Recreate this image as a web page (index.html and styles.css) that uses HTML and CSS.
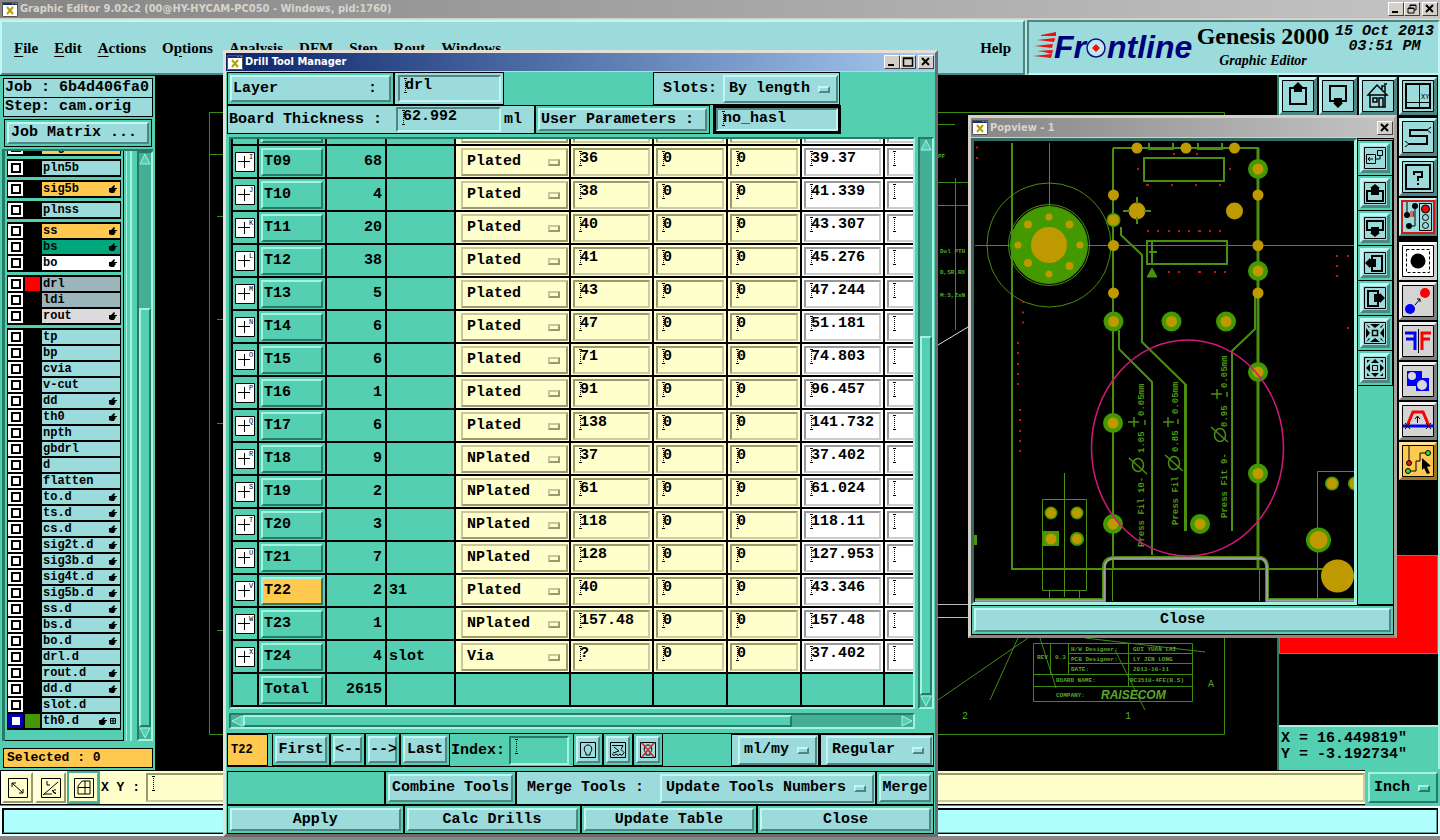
FILE: index.html
```html
<!DOCTYPE html>
<html lang="en">
<head>
<meta charset="utf-8">
<title>Graphic Editor 9.02c2</title>
<link rel="stylesheet" href="styles.css">
</head>
<body>
<svg class="defs" aria-hidden="true">
  <symbol id="xwin" viewBox="0 0 16 15"><path d="M0 0h16v15H0z" fill="#fff"/><path d="M0 0h16v3H0z" fill="#1b2a7c"/><path d="M10 1h2M13 1h2" stroke="#c8c8c8"/><path d="M.5.5h15v14H.5z" fill="none" stroke="#555"/><path d="M5 5l6 7M11 5l-6 7" stroke="#b5a000" stroke-width="2"/></symbol>
  <symbol id="hand" viewBox="0 0 8 8"><path d="M0 3h2l3-3 1 1-1 2h3v1H6l1 1-1 1H6l-1 2H2L0 7z"/></symbol>
</svg>
<div class="app">
  <header class="titlebar">
    <svg class="xi"><use href="#xwin"/></svg>
    <h1>Graphic Editor 9.02c2 (00@HY-HYCAM-PC050 - Windows, pid:1760)</h1>
    <button class="wb" aria-label="Minimize"><svg viewBox="0 0 12 10"><path d="M2 8h6" stroke="#000" stroke-width="2"/></svg></button>
    <button class="wb" aria-label="Restore"><svg viewBox="0 0 12 10"><path d="M4 4V1h6v5H8M4 1.5h6M2 4h6v5H2zM2 4.5h6" fill="none" stroke="#000"/></svg></button>
    <button class="wb wx" aria-label="Close"><svg viewBox="0 0 12 10"><path d="M2 1l7 7M9 1L2 8" stroke="#000" stroke-width="2"/></svg></button>
  </header>

  <div class="top">
    <nav class="menu">
      <button><u>F</u>ile</button><button><u>E</u>dit</button><button><u>A</u>ctions</button><button>O<u>p</u>tions</button><button>A<u>n</u>alysis</button><button>DFM</button><button>Step</button><button>Rout</button><button>Windows</button><button class="help">Help</button>
    </nav>
    <div class="brand">
      <svg class="logo" viewBox="0 0 162 36" role="img" aria-label="Frontline">
        <g fill="#f01010"><path d="M8 6l15-3v4l-15 0zM4 11l18-2-1 4-8-1zM1 17l19-2-1 4-8-1zM4 22l16-1-1 4-8-2zM0 27l19-2-1 4-8-1z"/></g>
        <g class="lt"><text x="21" y="29">Fr</text><text x="74" y="29">ntline</text></g>
        <circle cx="63" cy="19" r="9" fill="#bfe8ee" stroke="#101080" stroke-width="1.5"/><path d="M63 15l4 4-4 4-4-4z" fill="#f01010"/>
      </svg>
      <div class="prod"><strong>Genesis 2000</strong><em>Graphic Editor</em></div>
      <div class="date">15 Oct 2013<br>03:51 PM</div>
    </div>
  </div>

  <main class="mid">
    <aside class="side">
      <div class="info">Job : 6b4d406fa0</div>
      <div class="info">Step: cam.orig</div>
      <button class="btn matrix">Job Matrix ...</button>
      <div class="layers">
        <div class="listbox"><div class="list" id="layers"></div></div>
        <div class="rail"></div>
        <div class="vsb" role="scrollbar" aria-controls="layers" aria-valuenow="60"><svg viewBox="0 0 12 12"><path d="M6 1L1 11h10z" class="tri"/></svg><i class="gap1"></i><i class="thumb"></i><svg viewBox="0 0 12 12"><path d="M6 11L1 1h10z" class="tri"/></svg></div>
      </div>
      <div class="info sel">Selected : 0</div>
    </aside>

    <section class="canvas" aria-label="Board view">
      <svg viewBox="155 75 1122 695" preserveAspectRatio="xMinYMin slice" fill="none" stroke="#3c8c14">
        <path d="M209.500 112.500H1224.500V734.500H209.500zM209 154.500H223M217 216.500h7M217 319.500h7M217 423.500h7M217 630.500h7M935 124.500h20M938 182.500h30M938 205.500h30M955.500 178V330"/>
        <path d="M938 700l90-62M990 700l28-62M1085 638L1205 652M1040 638l16 50M1115 650l30 60"/>
        <path d="M1033.500 643.500H1192.500V701.500H1033.500zM1050.500 643V674M1068.500 643V674M1128.500 643V686M1033 674.500H1192M1033 686.500H1192M1068 653.500H1192M1068 663.500H1192"/>
        <path d="M938 345l30-18" stroke="#ddd"/><path d="M937 604.500H968M937 617.500H968" stroke="#bbb"/>
        <g class="ct"><text x="938" y="158">PF</text><text x="940" y="253">Dol PTH</text><text x="940" y="274">D,SR,RX</text><text x="940" y="297">M:S,ZxN</text><text x="1037" y="659">REV</text><text x="1055" y="659">0.3</text><text x="1071" y="651">H/W Designer:</text><text x="1133" y="651">GUI YUAN LAI</text><text x="1071" y="661">PCB Designer:</text><text x="1133" y="661">LY JEN LONG</text><text x="1071" y="671">DATE:</text><text x="1133" y="671">2013-10-11</text><text x="1056" y="682">BOARD NAME:</text><text x="1130" y="682">RC3510-4FE(B.S)</text><text x="1056" y="697">COMPANY:</text></g>
        <text class="rc" x="1101" y="699">RAISECOM</text>
        <g class="cz"><text x="962" y="719">2</text><text x="1125" y="719">1</text><text x="1208" y="687">A</text></g>
      </svg>
    </section>

    <aside class="right">
      <div class="tools4">
        <button class="tb" aria-label="Pan up"><svg viewBox="0 0 32 32"><path class="fr" d="M.5.5h31v31H.5z"/><path d="M12 8H8v16h16V8h-4" fill="none" stroke="#000" stroke-width="2"/><path d="M16 2l5 5h-1v5h-8V7h-1z"/></svg></button>
        <button class="tb" aria-label="Pan down"><svg viewBox="0 0 32 32"><path class="fr" d="M.5.5h31v31H.5z"/><path d="M12 21H8V6h16v15h-4" fill="none" stroke="#000" stroke-width="2"/><path d="M16 28l5-5h-1v-5h-8v5h-1z"/></svg></button>
        <button class="tb" aria-label="Home"><svg viewBox="0 0 32 32"><path class="fr" d="M.5.5h31v31H.5z"/><path d="M6 15L15 5l10 10zM8 15v12h15V15M11 18h4v4h-4zM17 27v-9h4v9M20 9V6h3v6M22 4h3" fill="none" stroke="#000" stroke-width="1.500"/></svg></button>
        <button class="tb" aria-label="XY view"><svg viewBox="0 0 32 32"><path d="M4 4h24v24H4z" fill="none" stroke="#000" stroke-width="2"/><path d="M.5.5h31v31H.5zM17.500 4v24M4 22.500h24" fill="none" stroke="#000"/><text x="19" y="19" class="t6">XY</text></svg></button>
      </div>
      <div class="tools">
        <button class="tb" aria-label="Serpentine"><svg viewBox="0 0 32 32"><path class="fr" d="M.5.5h31v31H.5z"/><path d="M26 9H8v6h17v8H7" fill="none" stroke="#000" stroke-width="2"/><path d="M25 9l4-3M25 9l4 3M7 23l-4-3M7 23l-4 3" stroke="#000"/></svg></button>
        <button class="tb" aria-label="Query"><svg viewBox="0 0 32 32"><path class="fr" d="M.5.5h31v31H.5z"/><path d="M4 4h24v24H4z" fill="none" stroke="#000" stroke-width="2"/><path d="M12 14v-3h8v5h-4v4M16 22v2" fill="none" stroke="#000" stroke-width="2"/></svg></button>
        <button class="tb alert" aria-label="Net control"><svg viewBox="0 0 32 32"><path class="fr" d="M.5.5h31v31H.5z"/><path d="M5 1v12M13 5v20H7M17.500 2.500h12v27h-12z" fill="none" stroke="#000"/><circle cx="13" cy="5" r="3"/><circle cx="5" cy="14" r="3"/><circle cx="7" cy="25" r="3"/><circle cx="23.500" cy="8" r="4" fill="red" stroke="#000"/><circle cx="23.500" cy="16.500" r="3" fill="none" stroke="#000"/><circle cx="23.500" cy="24.500" r="3" fill="none" stroke="#000"/><path d="M8 11h4M8 13h4M8 15h4M11.500 10.500v5" stroke="red"/></svg></button>
        <button class="tb white" aria-label="Select feature"><svg viewBox="0 0 32 32"><path class="fr" d="M.5.5h31v31H.5z"/><path d="M4.500 4.500h23v23h-23z" fill="none" stroke="#000" stroke-dasharray="3 2"/><circle cx="16" cy="16" r="7.500"/></svg></button>
        <button class="tb gray" aria-label="Measure"><svg viewBox="0 0 32 32"><path class="fr" d="M.5.5h31v31H.5z"/><circle cx="8" cy="24" r="5" fill="#00f"/><circle cx="23" cy="8" r="5" fill="red"/><path d="M13 20l5-6M15 14h3v3" fill="none" stroke="#000"/></svg></button>
        <button class="tb gray" aria-label="Mirror"><svg viewBox="0 0 32 32"><path class="fr" d="M.5.5h31v31H.5z"/><path d="M3 8h10v17M4 14h8" fill="none" stroke="#00f" stroke-width="3"/><path d="M29 8h-9v17M28 14h-8" fill="none" stroke="red" stroke-width="3"/><path d="M16.500 4v24" stroke="#000"/></svg></button>
        <button class="tb gray" aria-label="Drill pattern"><svg viewBox="0 0 32 32"><path class="fr" d="M.5.5h31v31H.5z"/><path d="M5 6h15v7h7v13H14v-5H5z" fill="#00f"/><circle cx="10" cy="11" r="4" fill="#d8d8d8"/><circle cx="20" cy="20" r="5" fill="#d8d8d8"/></svg></button>
        <button class="tb gray" aria-label="Etch"><svg viewBox="0 0 32 32"><path class="fr" d="M.5.5h31v31H.5z"/><path d="M1 21h30" stroke="#00f" stroke-width="3"/><path d="M5 21L11 7h10l6 14" fill="none" stroke="red" stroke-width="3"/><path d="M15.500 18v-6M13 14l2.500-3 2.500 3M3 18l5 6M8 18l-5 6M24 18l5 6M29 18l-5 6" fill="none" stroke="#000"/></svg></button>
        <button class="tb orange" aria-label="Net select"><svg viewBox="0 0 32 32"><path class="fr" d="M.5.5h31v31H.5z"/><path d="M7 1v15M6 26h8V16h4V8h7" fill="none" stroke="#000"/><circle cx="7" cy="18" r="2.500" fill="#e02010" stroke="#000"/><circle cx="6" cy="26" r="2.500" fill="#3d3" stroke="#000"/><circle cx="26" cy="8" r="2.500" fill="#3d3" stroke="#000"/><path d="M20 13l9 8-4 1 3 6-3 1-3-6-2 2z"/></svg></button>
      </div>
      <div class="overview"><div class="board"></div></div>
      <div class="coords">X = 16.449819"<br>Y = -3.192734"</div>
    </aside>
  </main>

  <div class="xyrow">
    <button class="cb" aria-label="Snap"><svg viewBox="0 0 20 20"><path d="M.5.5h19v19H.5z"/><path d="M4 5l11 10M4 9V5h4M15 11v4h-4"/></svg></button>
    <button class="cb" aria-label="Angle"><svg viewBox="0 0 20 20"><path d="M.5.5h19v19H.5z"/><path d="M2 17L17 4M3 16h8M6 3v4h3M11 12l4 4M15 12c-4-1-4 4 0 3"/></svg></button>
    <button class="cb on" aria-label="Grid"><svg viewBox="0 0 20 20"><path d="M.5.5h19v19H.5z"/><path d="M4 8l4-5h8v13H4zM11 3v13M4 9.500h12"/></svg></button>
    <label for="xy">X Y :</label>
    <input id="xy" class="field cur cream">
    <span class="opt teal inch"><select aria-label="Units"><option>Inch</option></select></span>
  </div>
  <div class="status"><div></div></div>
</div>

<section class="win drill" aria-label="Drill Tool Manager">
  <header class="wt active"><svg class="xi"><use href="#xwin"/></svg><h2>Drill Tool Manager</h2>
    <button class="wb" aria-label="Minimize"><svg viewBox="0 0 12 10"><path d="M2 8h6" stroke="#000" stroke-width="2"/></svg></button>
    <button class="wb" aria-label="Maximize"><svg viewBox="0 0 12 10"><path d="M1.500 1h9v8h-9zM1 1.500h9" fill="none" stroke="#000" stroke-width="1.500"/></svg></button>
    <button class="wb wx" aria-label="Close"><svg viewBox="0 0 12 10"><path d="M2 1l7 7M9 1L2 8" stroke="#000" stroke-width="2"/></svg></button>
  </header>
  <div class="dbody">
    <div class="r1">
      <button class="btn layerb"><span>Layer</span><span>:</span></button>
      <div class="cell lay"><input class="field cur" aria-label="Layer" value="drl"></div>
      <div class="cell slots"><label for="slots">Slots:</label><span class="opt"><select id="slots"><option>By length</option></select></span></div>
    </div>
    <div class="r2">
      <div class="cell thick"><label for="th">Board Thickness :</label><input id="th" class="field cur" value="62.992"><span>ml</span></div>
      <button class="btn user">User Parameters :</button>
      <div class="cell hasl"><input class="field cur" aria-label="User parameters" value="no_hasl"></div>
    </div>
    <div class="scrollarea">
      <div class="view"><table>
        <colgroup><col class="c1"><col class="c2"><col class="c3"><col class="c4"><col class="c5"><col class="c6"><col class="c7"><col class="c7"><col class="c6"><col class="c10"></colgroup>
        <tbody id="tools"></tbody>
      </table></div>
      <div class="vsb" role="scrollbar" aria-controls="tools" aria-valuenow="100"><svg viewBox="0 0 12 12"><path d="M6 1L1 11h10z" class="tri"/></svg><i class="gap2"></i><i class="thumb"></i><svg viewBox="0 0 12 12"><path d="M6 11L1 1h10z" class="tri"/></svg></div>
      <div class="hsb" role="scrollbar" aria-controls="tools" aria-valuenow="0"><svg viewBox="0 0 12 12"><path d="M1 6L11 1v10z" class="tri"/></svg><i class="thumb"></i><i class="gap3"></i><svg viewBox="0 0 12 12"><path d="M11 6L1 1v10z" class="tri"/></svg></div>
    </div>
    <div class="r3">
      <div class="cur-tool">T22</div>
      <button class="btn">First</button><button class="btn arrow">&lt;--</button><button class="btn arrow">--&gt;</button><button class="btn last">Last</button>
      <label for="idx">Index:</label><input id="idx" class="field cur tealf">
      <button class="btn ib" aria-label="Highlight"><svg viewBox="0 0 16 16"><path d="M.5.500h15v15H.5zM6 11C3 8 4 3 8 3s5 5 2 8v2H6z" fill="none" stroke="#000"/></svg></button>
      <button class="btn ib" aria-label="Select"><svg viewBox="0 0 16 16"><path d="M.5.500h15v15H.5zM2 3.500h11l-2 4 3 3-2 3-2-1.500-2 1.500-2-1.500-2 1.500-2-1.500M4 5l5 4-6 2" fill="none" stroke="#000"/></svg></button>
      <button class="btn ib" aria-label="Clear"><svg viewBox="0 0 16 16"><path d="M.5.500h15v15H.5zM6 11C3 8 4 3 8 3s5 5 2 8v2H6z" fill="none" stroke="#000"/><path d="M2 1l12 14M14 1L2 15" stroke="#e02020" stroke-width="1.500"/></svg></button>
      <div class="cell mlmy"><span class="opt"><select aria-label="Units"><option>ml/my</option></select></span></div>
      <div class="cell reg"><span class="opt"><select aria-label="Mode"><option>Regular</option></select></span></div>
    </div>
    <div class="r4">
      <div class="blank"></div>
      <button class="btn">Combine Tools</button>
      <div class="cell merge"><label for="mt">Merge Tools :</label><span class="opt"><select id="mt"><option>Update Tools Numbers</option></select></span></div>
      <button class="btn">Merge</button>
    </div>
    <div class="r5"><button class="btn">Apply</button><button class="btn">Calc Drills</button><button class="btn">Update Table</button><button class="btn">Close</button></div>
  </div>
</section>

<section class="win pop" aria-label="Popview - 1">
  <header class="wt"><svg class="xi"><use href="#xwin"/></svg><h2>Popview - 1</h2><button class="wb wx" aria-label="Close"><svg viewBox="0 0 12 10"><path d="M2 1l7 7M9 1L2 8" stroke="#000" stroke-width="2"/></svg></button></header>
  <div class="pbody">
    <div class="pcanvas">
      <svg viewBox="974 141 381 461" preserveAspectRatio="xMinYMin slice" fill="none" stroke="#4a8f10">
        <g stroke-width="2"><path d="M1012 143V569H1325M1113 148V569M1113 148H1258V569M1144 158H1224V181H1144zM1147 241H1227V264H1147zM1152 241V264M1149 252h8M1149 143v6h24v-6M1198 143v6h24v-6"/>
        <path d="M1121 227v8l21 20V342l43 42V531M1119 330v19l33 33V555M1255 293v36l-23 22V531"/></g>
        <path d="M1258 148V569M1185.500 384V531" stroke-width="3"/>
        <path d="M1049.500 143V208M975 245.500H1354M1112.500 569V601M1259.500 569V601M1042.500 499.500H1086.500V590.500H1042.500zM1064.500 473V597M1049.500 590V598M1079.500 590V598M1317.500 598V471.500H1356"/>
        <circle cx="1049" cy="245" r="62"/><circle cx="1049" cy="245" r="40.500"/>
        <circle cx="1049" cy="245" r="38.500" fill="#449900"/>
        <path d="M1152 268l5 9h-10z" fill="#4a8f10"/>
        <path d="M975 600H1104V567q0-8 8-9H1261q6 2 6 9V600H1355" stroke="#4a8f10" stroke-width="4"/>
        <path d="M975 600.500H1104.500V568q0-8 8-9.500H1261q5 1 6 8V600.500H1355" stroke="#a09ca4" stroke-width="2"/>
        <g fill="#449900" stroke="none"><circle cx="1113.500" cy="220" r="7"/><circle cx="1258" cy="169" r="10"/><circle cx="1258" cy="271" r="10"/><circle cx="1226" cy="321.500" r="10"/><circle cx="1258" cy="372" r="10"/><circle cx="1113.500" cy="321.500" r="10"/><circle cx="1171.500" cy="321.500" r="10"/><circle cx="1113" cy="423" r="10"/><circle cx="1113" cy="524" r="10"/><circle cx="1200" cy="524" r="10"/><circle cx="1258" cy="473.500" r="10"/><circle cx="1318.500" cy="540" r="12.500"/><circle cx="1332" cy="483.500" r="7"/><circle cx="1355" cy="483.500" r="7"/><circle cx="1051" cy="513" r="6.500"/><circle cx="1077" cy="513" r="6.500"/><circle cx="1077" cy="539" r="7"/><path d="M1043 531h16v15h-16zM974 535h3v10h-3z"/></g>
        <g fill="#bf9900" stroke="none"><circle cx="1049" cy="245" r="18"/><circle cx="1049" cy="217" r="3.500"/><circle cx="1069.500" cy="224.500" r="4"/><circle cx="1080" cy="245" r="3.500"/><circle cx="1069.500" cy="266" r="4"/><circle cx="1049" cy="274" r="3.500"/><circle cx="1028" cy="263" r="4"/><circle cx="1018" cy="245" r="3.500"/><circle cx="1028" cy="224.500" r="4"/>
        <circle cx="1137" cy="148" r="5.500"/><circle cx="1186" cy="148" r="5.500"/><circle cx="1234.500" cy="148" r="5.500"/><circle cx="1113.500" cy="195" r="5.500"/><circle cx="1113.500" cy="220" r="5.500"/><circle cx="1113.500" cy="245.500" r="5.500"/><circle cx="1113.500" cy="293" r="5.500"/><circle cx="1258" cy="195" r="5.500"/><circle cx="1258" cy="245.500" r="5.500"/><circle cx="1258" cy="293" r="5.500"/><circle cx="1137" cy="211" r="8.500"/><circle cx="1234.500" cy="211" r="8.500"/>
        <circle cx="1258" cy="169" r="5.500"/><circle cx="1258" cy="271" r="5.500"/><circle cx="1226" cy="321.500" r="5.500"/><circle cx="1258" cy="372" r="5.500"/><circle cx="1113.500" cy="321.500" r="5.500"/><circle cx="1171.500" cy="321.500" r="5.500"/><circle cx="1113" cy="423" r="5.500"/><circle cx="1113" cy="524" r="5.500"/><circle cx="1200" cy="524" r="5.500"/><circle cx="1258" cy="473.500" r="5.500"/><circle cx="1318.500" cy="540" r="9"/><circle cx="1337.500" cy="576" r="16.500"/><circle cx="1332" cy="483.500" r="5.500"/><circle cx="1355" cy="483.500" r="5.500"/><circle cx="1051" cy="513" r="5"/><circle cx="1077" cy="513" r="5"/><circle cx="1051" cy="539" r="5.500"/><circle cx="1077" cy="539" r="5"/></g>
        <path d="M1137 197v7M1137 217v7M1123 211h7M1144 211h7" stroke-width="2"/>
        <path stroke="#c01818" stroke-width="2" d="M976 147.500h2M976 158h2M1173 154h2M1196 154h2M1137 169h2M1146 185h3M1171 185h2M1195 185h2M1219 185h2M1229 169h2M1147 231h2M1157 231h2M1168 231h2M1178 231h2M1188 231h2M1198 231h3M1209 231h2M1219 231h2M1168 272h2M1178 272h2M1198 272h3M1214 272h2M1224 272h2M1022 302h2M1022 312.500h2M1022 322.500h2M1017 343h2M1017 353h2M1017 364h2M1017 374h2M1017 384h2M1019 410h2M1019 420h2M1019 431h2M1019 441h2M1019 451h2M1336 256h2M1347 256h2M1336 266h2M1336 276h2M1347 328h2"/>
        <g class="pt">
          <text transform="translate(1144 547) rotate(-90)">Press Fil 10-</text><text transform="translate(1144 453) rotate(-90)">1.05</text><text transform="translate(1144 416) rotate(-90)">0.05mm</text>
          <text transform="translate(1178 525) rotate(-90)">Press Fil</text><text transform="translate(1178 452) rotate(-90)">0.85</text><text transform="translate(1178 414) rotate(-90)">0.05mm</text>
          <text transform="translate(1227 518) rotate(-90)">Press Fit 9-</text><text transform="translate(1227 427) rotate(-90)">0.95</text><text transform="translate(1227 388) rotate(-90)">0.05mm</text>
        </g>
        <g stroke-width="1.500"><ellipse cx="1138" cy="465" rx="5.500" ry="6.500"/><path d="M1129 458l18 16M1134 417v10M1128 422h11M1145 420v5"/><ellipse cx="1174" cy="463" rx="5.500" ry="6.500"/><path d="M1165 455l18 16M1168 417v10M1163 422h11M1178 419v5"/><ellipse cx="1220" cy="435" rx="5.500" ry="6.500"/><path d="M1211 427l17 15M1217 389v10M1211 394h11M1227 392v5"/></g>
        <ellipse cx="1187.500" cy="448" rx="96" ry="108" stroke="#d4187c" stroke-width="1.500"/>
      </svg>
    </div>
    <div class="pcol">
      <button class="pb" aria-label="Zoom window"><svg viewBox="0 0 22 22"><path class="fr" d="M.5.500h21v21H.5z"/><path d="M2.500 7.500h9v9h-9zM13.500 3.500h5v5h-5zM11 12h5V9M4 12h5M6 10l-2 2 2 2" fill="none" stroke="#000"/></svg></button>
      <button class="pb" aria-label="Up"><svg viewBox="0 0 22 22"><path class="fr" d="M.5.500h21v21H.5z"/><path d="M7 9H3v10h16V9h-4" fill="none" stroke="#000" stroke-width="2"/><path d="M11 2l5 4h-1v7H7V6H6z"/></svg></button>
      <button class="pb" aria-label="Down"><svg viewBox="0 0 22 22"><path class="fr" d="M.5.500h21v21H.5z"/><path d="M7 13H3V4h16v9h-4" fill="none" stroke="#000" stroke-width="2"/><path d="M11 20l5-4h-1v-6H7v6H6z"/></svg></button>
      <button class="pb" aria-label="Left"><svg viewBox="0 0 22 22"><path class="fr" d="M.5.500h21v21H.5z"/><path d="M8 8V4h10v15H8v-4" fill="none" stroke="#000" stroke-width="2"/><path d="M1 11l5-5v1h6v8H6v1z"/></svg></button>
      <button class="pb" aria-label="Right"><svg viewBox="0 0 22 22"><path class="fr" d="M.5.500h21v21H.5z"/><path d="M14 8V4H4v15h10v-4" fill="none" stroke="#000" stroke-width="2"/><path d="M21 11l-5-5v1h-6v8h6v1z"/></svg></button>
      <button class="pb" aria-label="Zoom in"><svg viewBox="0 0 22 22"><path class="fr" d="M.5.500h21v21H.5z"/><path d="M8.500 8.500h5v5h-5z" fill="none" stroke="#000" stroke-width="1.500"/><path d="M6 2h10l-5 4zM6 20h10l-5-4zM2 6v10l4-5zM20 6v10l-4-5zM2 2l4 3-1 1zM20 2l-4 3 1 1zM2 20l4-3-1-1zM20 20l-4-3 1-1z"/></svg></button>
      <button class="pb" aria-label="Zoom out"><svg viewBox="0 0 22 22"><path class="fr" d="M.5.500h21v21H.5z"/><path d="M8.500 8.500h5v5h-5z" fill="none" stroke="#000"/><path d="M7 6h8l-4-4zM7 16h8l-4 4zM6 7v8l-4-4zM16 7v8l4-4zM3 3h3L3 6zM19 3h-3l3 3zM3 19h3l-3-3zM19 19h-3l3-3z"/></svg></button>
    </div>
  </div>
  <div class="pclose"><button class="btn">Close</button></div>
</section>
<script src="app.js"></script>
</body>
</html>
```
FILE: styles.css
```css
*, *::before, *::after { box-sizing: border-box; }
:root {
  --blue: #9bdbdb; --blue-hi: #c0f6f4; --blue-lo: #4f8582;
  --teal: #54cfb1; --teal-hi: #a4f2e2; --teal-lo: #267a66; --trough: #45af96;
  --cream: #ffffcc; --orange: #ffc84f; --mono: "Liberation Mono", monospace;
}
body { margin: 0; background: #000; overflow: hidden; font: bold 15px/18px var(--mono); color: #000; }
button, input, select { font: inherit; color: inherit; margin: 0; padding: 0; border-radius: 0; min-width: 0; }
button { background: none; border: 0; }
h1, h2 { margin: 0; font: bold 11px/16px "DejaVu Sans Condensed", "DejaVu Sans", sans-serif; flex: 1; white-space: nowrap; }
svg { display: block; }
.defs { position: absolute; width: 0; height: 0; }
.app { height: 100vh; display: flex; flex-direction: column; background: #4f8582; }

.titlebar, .wt { display: flex; align-items: center; background: linear-gradient(90deg, #868686, #c4c4c4); color: #d8d4cc; }
.titlebar { height: 19px; padding: 0 2px 0 2px; border-bottom: 1px solid #d4d0c8; }
.xi { width: 16px; height: 15px; margin-right: 2px; }
.wb { width: 16px; height: 14px; background: #d4d0c8; border: 1px solid; border-color: #fff #404040 #404040 #fff; display: grid; place-items: center; }
.wb svg { width: 12px; height: 10px; }
.wx { margin-left: 2px; }

.top { display: flex; height: 56px; gap: 2px; padding-top: 1px; background: #b8e8e4; }
.menu { flex: 1; display: flex; align-items: center; gap: 16px; padding: 0 12px; background: var(--blue); border: 2px solid; border-color: var(--blue-hi) var(--blue-lo) var(--blue-lo) var(--blue-hi); }
.menu button { font: bold 15px/18px "Liberation Serif", serif; }
.menu u { text-underline-offset: 3px; text-decoration-thickness: 1px; }
.help { margin-left: auto; }
.brand { width: 413px; display: flex; padding-left: 4px; background: var(--blue); border: 2px solid; border-color: var(--blue-lo) var(--blue-hi) var(--blue-hi) var(--blue-lo); }
.logo { width: 162px; height: 36px; margin-top: 7px; }
.lt { font: italic bold 32px "Liberation Sans", sans-serif; fill: #00007c; }
.prod { width: 136px; text-align: center; font-family: "Liberation Serif", serif; white-space: nowrap; }
.prod strong { display: block; font-size: 24px; line-height: 28px; }
.prod em { font-size: 14px; line-height: 22px; }
.date { font-style: italic; line-height: 15px; text-align: center; flex: 1; white-space: nowrap; padding-top: 2px; }

.mid { flex: 1; min-height: 0; display: flex; background: #000; }
.side { width: 155px; display: flex; flex-direction: column; padding: 2px; background: var(--teal); border-top: 1px solid #000; }
.info { height: 20px; margin: 0 0 0 1px; border: 1px solid #000; background: var(--blue); padding: 0 1px; white-space: nowrap; }
.info + .info { margin-top: -1px; }
.matrix { text-align: left; }
.sel { background: var(--orange); margin: 7px 0 0 1px; font-size: 13px; padding-left: 3px; }
.btn { background: var(--blue); border: 2px solid; border-color: var(--blue-hi) var(--blue-lo) var(--blue-lo) var(--blue-hi); box-shadow: 0 0 0 2px var(--teal), 0 0 0 3px #000; margin: 3px; white-space: nowrap; }
.side .matrix { margin: 5px 4px 4px 5px; height: 22px; padding-left: 2px; }
.layers { flex: 1; min-height: 0; display: flex; margin-top: 1px; border-top: 2px solid var(--teal-lo); border-left: 3px solid var(--teal-lo); }
.listbox { width: 122px; overflow: hidden; display: flex; flex-direction: column; justify-content: flex-end; border-right: 1px solid #000; border-bottom: 1px solid #000; padding: 0 2px 10px 2px; }
.list { display: flex; flex-direction: column; gap: 3px; }
.group { background: #000; padding: 1px; }
.lrow { display: grid; grid-template-columns: 15px 15px 1fr; gap: 2px; height: 16px; padding: 1px 0; font-size: 12px; line-height: 14px; }
.lrow input { appearance: none; width: 15px; height: 14px; background: linear-gradient(#fff, #fff) center / 6px 6px no-repeat, linear-gradient(#000, #000) center / 10px 10px no-repeat, #fff; }
.lrow .name { background: var(--blue); display: flex; align-items: center; gap: 2px; padding: 0 3px 0 1px; min-width: 0; }
.lrow label { flex: 1; }
.lrow svg { width: 8px; height: 8px; }
.lrow.o .name { background: var(--orange); } .lrow.g .name { background: #00a67c; } .lrow.w .name { background: #fff; }
.lrow.s .name { background: #9cb4bc; } .lrow.l .name { background: #dcdadc; }
.lrow.lit .sw { background: red; } .lrow.act .sw { background: #449900; }
.lrow.act input { background: linear-gradient(#fff, #fff) center / 8px 8px no-repeat, #0000b0; }
.rail { width: 6px; margin: 0 5px 0 2px; border-right: 2px solid var(--teal-hi); border-left: 1px solid var(--teal-hi); }
.vsb, .hsb { display: flex; background: var(--trough); border: 2px solid; border-color: var(--teal-lo) var(--teal-hi) var(--teal-hi) var(--teal-lo); }
.vsb { flex-direction: column; width: 16px; }
.vsb svg, .hsb svg { width: 12px; height: 12px; flex: none; }
.tri { fill: var(--teal); stroke: var(--teal-hi); }
.thumb { flex: 1; background: var(--teal); border: 2px solid; border-color: var(--teal-hi) var(--teal-lo) var(--teal-lo) var(--teal-hi); }
.gap1 { height: 143px; } .gap2 { height: 185px; } .gap3 { width: 109px; }

.canvas { flex: 1; min-width: 0; overflow: hidden; }
.canvas svg { width: 100%; height: 100%; }
.ct, .rc, .cz { fill: #58a82c; stroke: none; font-family: "Liberation Mono", monospace; }
.ct { font-size: 6px; } .cz { font-size: 10px; font-weight: normal; }
.rc { font: italic bold 12px "Liberation Sans", sans-serif; }

.right { width: 163px; display: flex; flex-direction: column; border-left: 2px solid var(--teal-lo); border-right: 2px solid var(--teal-hi); background: #000; }
.tools4 { display: flex; gap: 2px; padding-top: 2px; }
.tools { display: flex; flex-direction: column; align-items: flex-end; gap: 2px; padding: 3px 1px 4px 0; }
.tb { width: 38px; height: 38px; background: var(--blue); border: 3px solid; border-color: var(--blue-hi) var(--blue-lo) var(--blue-lo) var(--blue-hi); }
.tb svg { width: 32px; height: 32px; }
.fr { fill: none; stroke: #000; }
.alert { outline: 2px solid #d01818; outline-offset: -4px; }
.white { background: #fff; border-color: #fff #d0d0d0 #d0d0d0 #fff; margin-top: 4px; }
.gray { background: #d4d4d4; border-color: #f4f4f4 #808080 #808080 #f4f4f4; }
.orange { background: var(--orange); border-color: #ffe29a #a07820 #a07820 #ffe29a; }
.t6 { font: 7px "Liberation Mono", monospace; }
.overview { flex: 1; padding-top: 71px; border-bottom: 2px solid var(--teal-hi); }
.board { height: 99px; background: red; border: 1px solid #a07820; }
.coords { height: 43px; background: var(--teal); padding: 4px 2px; line-height: 16px; white-space: nowrap; }

.xyrow { height: 35px; display: flex; border: 1px solid #000; background: var(--cream); font-size: 13px; }
.cb { width: 31px; height: 31px; margin: 1px; border: 2px solid; border-color: #fff #999970 #999970 #fff; background: var(--cream); display: grid; place-items: center; }
.cb svg { width: 20px; height: 20px; fill: none; stroke: #000; }
.cb.on { outline: 2px solid var(--trough); outline-offset: -1px; }
.xyrow label { width: 44px; padding: 8px 0 0 1px; white-space: nowrap; }
.field { height: 27px; width: 100%; display: block; border: 2px solid; border-color: var(--blue-lo) var(--blue-hi) var(--blue-hi) var(--blue-lo); background-color: var(--blue); padding: 0 0 7px 5px; outline: 0; }
.cur { background-image: repeating-linear-gradient(#000 0 1px, transparent 1px 2px), linear-gradient(#000, #000), linear-gradient(#000, #000); background-size: 1px 15px, 3px 1px, 3px 1px; background-position: 5px 1px, 4px 1px, 4px 15px; background-repeat: no-repeat; }
.cream { background-color: var(--cream); border-color: #999970 #cccca0 #cccca0 #999970; }
.xyrow .field { flex: 1; margin: 2px 3px 2px 2px; height: auto; padding-bottom: 10px; }
.status { height: 35px; padding: 2px 2px 5px; background: #e8ffff; border-top: 1px solid #60888a; box-shadow: inset 0 -4px #888; }
.status div { height: 26px; background: #b0ffff; border: 2px solid; outline: 1px solid #000; outline-offset: -1px; border-color: #000 #60a0a0 #60a0a0 #000; }

.opt { --c: var(--blue); --hi: var(--blue-hi); --lo: var(--blue-lo); position: relative; display: block; border: 2px solid; border-color: var(--hi) var(--lo) var(--lo) var(--hi); background: var(--c); }
.opt.teal { --c: var(--teal); --hi: var(--teal-hi); --lo: var(--teal-lo); }
.opt.yel { --c: var(--cream); --hi: #c8c89c; --lo: #999970; }
.opt select { appearance: none; border: 0; background: none; width: 100%; height: 100%; padding: 0 4px; display: block; outline: 0; }
.opt::after { content: ""; position: absolute; right: 6px; top: calc(50% - 3px); width: 12px; height: 7px; border: 2px solid; border-color: var(--hi) var(--lo) var(--lo) var(--hi); pointer-events: none; }
.inch { width: 70px; margin: 1px 1px 1px 0; outline: 3px solid var(--teal); font-size: 15px; }

.win { position: absolute; background: var(--teal); border: 3px solid; border-color: #e4e0d8 #6c6c6c #6c6c6c #e4e0d8; }
.drill { left: 223px; top: 50px; width: 715px; }
.pop { left: 968px; top: 115px; width: 429px; border-color: #d4d0c8 #a8a49c #8c8880 #d4d0c8; }
.wt { height: 20px; border-bottom: 1px solid #d4d0c8; padding: 0 1px; }
.wt.active { background: linear-gradient(90deg, #0a246a, #a6caf0); color: #fff; height: 19px; }
.dbody { padding: 0 1px; }
.r1, .r2, .r3, .r4, .r5 { display: flex; }
.cell { border: 1px solid #000; background: var(--blue); display: flex; align-items: center; }
.r1 { height: 33px; }
.layerb { width: 161px; display: flex; justify-content: space-between; align-items: center; padding: 0 12px 0 1px; }
.lay { width: 110px; padding: 0 2px 0 3px; }
.slots { margin: 0 94px 0 auto; width: 187px; justify-content: space-between; padding: 0 1px 0 9px; }
.slots .opt { width: 115px; height: 28px; }
.r2 { height: 29px; }
.thick { width: 308px; padding: 0 1px; }
.thick .field { width: 105px; height: 25px; margin: 0 3px 0 14px; }
.user { width: 169px; text-align: left; padding-left: 1px; }
.hasl { width: 128px; border-width: 3px; margin-left: 3px; }
.hasl .field { height: 23px; padding-bottom: 3px; }
.scrollarea { display: grid; grid-template-columns: 1fr 16px; gap: 4px 3px; padding: 3px 0 0 2px; }
.view { height: 572px; min-width: 0; overflow: hidden; display: flex; flex-direction: column; justify-content: flex-end; border: 2px solid; border-color: var(--teal-lo) var(--teal-hi) var(--teal-hi) var(--teal-lo); }
.hsb { height: 16px; }
table { table-layout: fixed; width: 734px; flex: none; border-collapse: separate; border-spacing: 0; }
.c1 { width: 28px; } .c2 { width: 68px; } .c3 { width: 60px; } .c4 { width: 69px; } .c5 { width: 115px; } .c6 { width: 83px; } .c7 { width: 74px; } .c10 { width: 80px; }
td { height: 33px; padding: 0; border: solid #000; border-width: 0 2px 2px 0; vertical-align: middle; }
td:first-child { border-left-width: 2px; }
td.y { background: var(--cream); } td.wh { background: #fff; }
td.n { text-align: right; padding-right: 3px; } td.t { padding-left: 2px; }
td svg { width: 20px; height: 20px; margin-left: 2px; }
.tool { width: 62px; height: 28px; margin: 0 2px; display: block; text-align: left; padding-left: 1px; background: var(--teal); border: 2px solid; border-color: var(--teal-hi) var(--teal-lo) var(--teal-lo) var(--teal-hi); }
.tool.pick { background: var(--orange); }
td .opt { height: 28px; margin: 0 1px 0 5px; }
td .field { width: calc(100% - 4px); height: 28px; margin: 0 2px; }
.wh .field { background-color: #fff; border-color: #999 #ccc #ccc #999; }
.r3 { height: 34px; margin-top: 4px; border: solid #000; border-width: 1px 0; align-items: stretch; }
.r3 .btn { margin: 2px 3px 3px; }
.cur-tool { width: 41px; margin-right: 4px; background: var(--orange); border: 1px solid #000; font: bold 12px/30px var(--mono); padding-left: 3px; }
.r3 .btn { width: 52px; }
.r3 .arrow { width: 29px; }
.r3 .last { width: 44px; }
.r3 label { padding: 8px 4px 0 1px; }
.r3 .field { width: 60px; margin: 2px 4px 2px 0; height: 29px; }
.tealf { background-color: var(--teal); border-color: var(--teal-lo) var(--teal-hi) var(--teal-hi) var(--teal-lo); }
.r3 .ib { width: 24px; display: grid; place-items: center; }
.ib svg { width: 16px; height: 16px; }
.mlmy { margin-left: auto; width: 88px; padding-left: 6px; }
.reg { width: 115px; padding-left: 5px; border-left-width: 2px; }
.mlmy .opt, .reg .opt { flex: 1; height: 29px; margin-right: 1px; }
.r4 { height: 34px; margin-top: 4px; }
.blank { width: 158px; border: 1px solid #000; }
.r4 .btn { width: 125px; }
.merge { flex: 1; justify-content: space-between; padding: 0 1px 0 10px; }
.merge .opt { width: 214px; height: 29px; }
.r4 .merge + .btn { width: 52px; }
.r5 { height: 29px; }
.r5 .btn { flex: 1; }

.pbody { display: flex; height: 467px; }
.pcanvas { flex: 1; min-width: 0; background: #000; border: 3px solid; border-color: #356b63 var(--teal-hi) var(--teal-hi) #356b63; }
.pcanvas svg { width: 100%; height: 100%; }
.pcol { width: 37px; border: 1px solid #000; }
.pb { display: grid; place-items: center; width: 30px; height: 30px; margin: 4px 2px 5px; background: var(--blue); border: 3px solid; border-color: var(--blue-hi) var(--blue-lo) var(--blue-lo) var(--blue-hi); box-shadow: 0 0 0 2px var(--teal), 0 0 0 3px #000; }
.pb svg { width: 22px; height: 22px; }
.pt { font: bold 9px "Liberation Mono", monospace; fill: #4f9a14; stroke: none; }
.pclose { display: flex; height: 30px; }
.pclose .btn { flex: 1; }
```
FILE: app.js
```js
const tools = [
  ["", "", "", "", "", ""],
  ["T09", 68, "", "Plated", "36", "39.37"], ["T10", 4, "", "Plated", "38", "41.339"],
  ["T11", 20, "", "Plated", "40", "43.307"], ["T12", 38, "", "Plated", "41", "45.276"],
  ["T13", 5, "", "Plated", "43", "47.244"], ["T14", 6, "", "Plated", "47", "51.181"],
  ["T15", 6, "", "Plated", "71", "74.803"], ["T16", 1, "", "Plated", "91", "96.457"],
  ["T17", 6, "", "Plated", "138", "141.732"], ["T18", 9, "", "NPlated", "37", "37.402"],
  ["T19", 2, "", "NPlated", "61", "61.024"], ["T20", 3, "", "NPlated", "118", "118.11"],
  ["T21", 7, "", "NPlated", "128", "127.953"], ["T22", 2, "31", "Plated", "40", "43.346"],
  ["T23", 1, "", "NPlated", "157.48", "157.48"], ["T24", 4, "slot", "Via", "?", "37.402"]
];
const field = (label, value, cls) => `<td class="${cls}"><input class="field cur cream" aria-label="${label}" value="${value}"></td>`;
const hole = i => i ? `<svg viewBox="0 0 20 20"><path d="M.5.5h19v19H.5z" fill="#fff" stroke="#000"/><path d="M3 9.500h12M9.500 4v12" stroke="#000"/><text x="14" y="7" class="t6">${String.fromCharCode(72 + i)}</text></svg>` : "";
document.getElementById("tools").innerHTML = tools.map(([id, n, note, type, size, drill], i) => `<tr>
  <td>${hole(i)}</td>
  <td><button class="tool${id === "T22" ? " pick" : ""}">${id}</button></td><td class="n">${n}</td><td class="t">${note}</td>
  <td class="y"><span class="opt yel"><select aria-label="${id} type"><option>${type}</option></select></span></td>
  ${field(id + " finish size", size, "y")}${field(id + " tolerance plus", id && "0", "y")}${field(id + " tolerance minus", id && "0", "y")}${field(id + " drill size", drill, "wh")}${field(id + " designator", "", "wh")}</tr>`).join("") +
  `<tr><td></td><td><button class="tool">Total</button></td><td class="n">2615</td>${"<td></td>".repeat(7)}</tr>`;

// name | row style | marks (h: hand, p: grid)
const groups = [
  "sig4b|o|h", "pln5b||", "sig5b|o|h", "plnss||", "ss|o|h,bs|g|h,bo|w|h", "drl|s lit|,ldi|s|,rout|l|h",
  "tp||,bp||,cvia||,v-cut||,dd||h,th0||h,npth||,gbdrl||,d||,flatten||,to.d||h,ts.d||h,cs.d||h,sig2t.d||h,sig3b.d||h,sig4t.d||h,sig5b.d||h,ss.d||h,bs.d||h,bo.d||h,drl.d||,rout.d||h,dd.d||h,slot.d||,th0.d|act|hp"
];
const hand = '<svg><use href="#hand"/></svg>';
const grid = '<svg viewBox="0 0 8 8"><path d="M1.500 1.500h5v5h-5zM4 1v6M1 4h6" fill="none" stroke="#000"/></svg>';
document.getElementById("layers").innerHTML = groups.map(g => `<div class="group">${g.split(",").map(r => {
  const [name, cls, marks] = r.split("|");
  return `<div class="lrow ${cls}"><input type="checkbox" id="l-${name}"><span class="sw"></span><div class="name"><label for="l-${name}">${name}</label>${marks.includes("h") ? hand : ""}${marks.includes("p") ? grid : ""}</div></div>`;
}).join("")}</div>`).join("");
```
